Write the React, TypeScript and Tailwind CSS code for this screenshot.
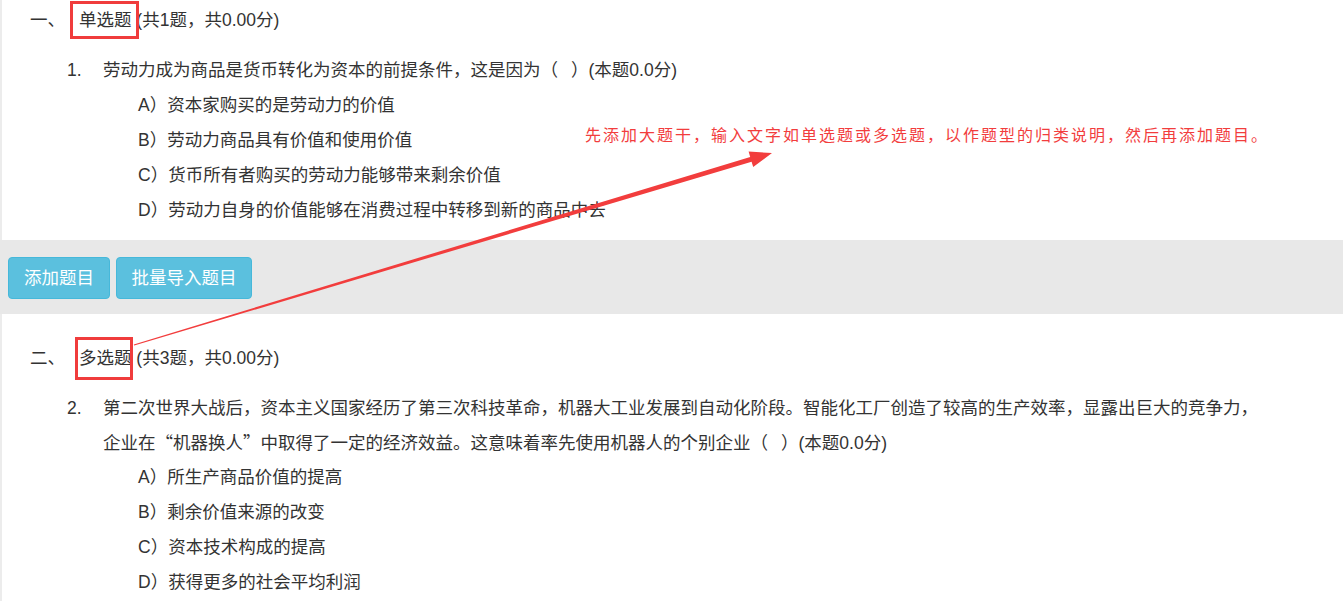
const options1 = [
  "A）资本家购买的是劳动力的价值",
  "B）劳动力商品具有价值和使用价值",
  "C）货币所有者购买的劳动力能够带来剩余价值",
  "D）劳动力自身的价值能够在消费过程中转移到新的商品中去",
];

const options2 = [
  "A）所生产商品价值的提高",
  "B）剩余价值来源的改变",
  "C）资本技术构成的提高",
  "D）获得更多的社会平均利润",
];

function Cjk({ children }: { children: string }) {
  return <span className="font-['Noto_Sans_CJK_SC',sans-serif] leading-none">{children}</span>;
}

// blank answer slot: （   ）
function Blank() {
  return (
    <>
      <Cjk>（</Cjk>
      <span className="inline-block h-0 w-[13px]" />
      <Cjk>）</Cjk>
    </>
  );
}

function AddButton({ label, width }: { label: string; width: string }) {
  return (
    <button
      className={`flex h-[42px] items-center justify-center rounded-[4px] border border-[#46b8da] bg-[#5bc0de] text-white ${width}`}
    >
      {label}
    </button>
  );
}

export default function App() {
  return (
    <div className="relative h-[601px] w-[1343px] overflow-hidden bg-white font-['Liberation_Sans','Noto_Sans_CJK_SC',sans-serif] text-[17.5px] text-[#333]">
      {/* 一、单选题 */}
      <section className="border-l-2 border-[#ececec] pb-[12.5px]">
        <div className="flex pl-[28px] leading-[40px]">
          <span className="w-[49px]">一、</span>
          <span className="relative">
            单选题
            <span className="absolute left-[-9px] top-[1px] h-[38px] w-[69px] border-[3px] border-[#f03c3c]" />
          </span>
          <span className="whitespace-pre"> (共1题，共0.00分)</span>
        </div>
        <div className="mt-[12.5px] flex pl-[65px] leading-[35px]">
          <span className="w-[36px]">1.</span>
          <span>
            劳动力成为商品是货币转化为资本的前提条件，这是因为<Blank />(本题0.0分)
          </span>
        </div>
        <ul className="pl-[136px] leading-[35px]">
          {options1.map((o) => (
            <li key={o}>{o}</li>
          ))}
        </ul>
      </section>

      {/* toolbar */}
      <div className="flex h-[74px] items-start gap-[6px] bg-[#e8e8e8] pl-[8px] pt-[17px]">
        <AddButton label="添加题目" width="w-[102px]" />
        <AddButton label="批量导入题目" width="w-[136px]" />
      </div>

      {/* 二、多选题 */}
      <section className="border-l-2 border-[#ececec] pt-[24px] pb-[20px]">
        <div className="flex pl-[28px] leading-[40px]">
          <span className="w-[49px]">二、</span>
          <span className="relative">
            多选题
            <span className="absolute left-[-4px] top-[-1px] h-[43px] w-[58px] border-[3px] border-[#f03c3c]" />
          </span>
          <span className="whitespace-pre"> (共3题，共0.00分)</span>
        </div>
        <div className="mt-[13px] flex pl-[65px] leading-[34.5px]">
          <span className="w-[36px]">2.</span>
          <div className="whitespace-nowrap">
            <div>
              第二次世界大战后，资本主义国家经历了第三次科技革命，机器大工业发展到自动化阶段。智能化工厂创造了较高的生产效率，显露出巨大的竞争力，
            </div>
            <div>
              企业在<Cjk>“</Cjk>机器换人<Cjk>”</Cjk>中取得了一定的经济效益。这意味着率先使用机器人的个别企业<Blank />(本题0.0分)
            </div>
          </div>
        </div>
        <ul className="pl-[136px] leading-[35px]">
          {options2.map((o) => (
            <li key={o}>{o}</li>
          ))}
        </ul>
      </section>

      {/* annotation */}
      <div className="absolute left-[585px] top-[125px] whitespace-nowrap text-[16px] leading-[22px] tracking-[2px] text-[#f23d3d]">
        先添加大题干，输入文字如单选题或多选题，以作题型的归类说明，然后再添加题目。
      </div>
      <svg className="pointer-events-none absolute left-0 top-0" width="1343" height="601">
        <polygon
          fill="#f23d3d"
          points="133.8,344.4 750.2,156.9 748.6,151.6 772,153 753.2,167 751.6,161.7 134.2,345.6"
        />
      </svg>
    </div>
  );
}
